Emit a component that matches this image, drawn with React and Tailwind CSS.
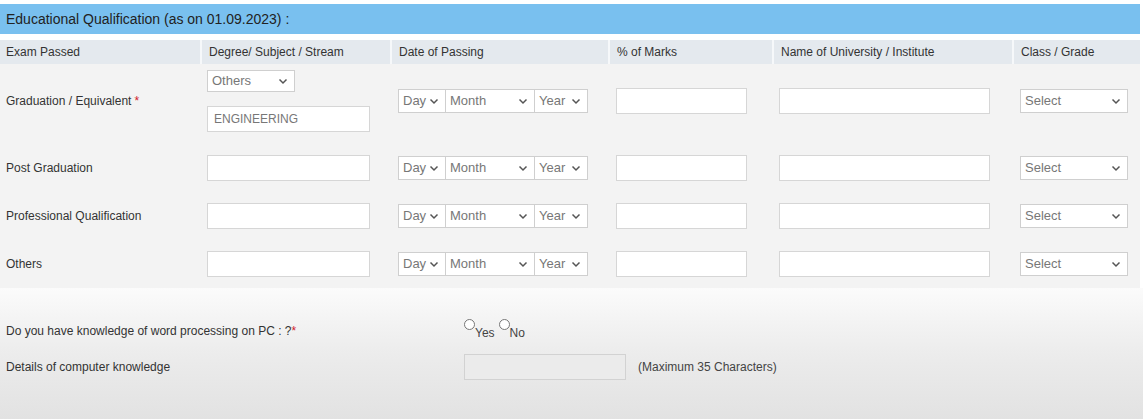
import React from "react";

const cols = "grid grid-cols-[200px_190px_218px_164px_240px_128px]";

function Chevron() {
  return (
    <svg width="10" height="7" viewBox="0 0 10 7" className="shrink-0">
      <polyline points="1.5,1.5 5,5 8.5,1.5" fill="none" stroke="#555" strokeWidth="1.5" />
    </svg>
  );
}

function FakeSelect({ label, className }) {
  return (
    <div
      className={`flex items-center justify-between bg-white border border-[#cfcfcf] pl-[4px] pr-[6px] text-[13px] text-[#777] ${className}`}
    >
      <span>{label}</span>
      <Chevron />
    </div>
  );
}

function Input({ className, children }) {
  return (
    <div className={`bg-white border border-[#d6d6d6] flex items-center pl-[6px] text-[12px] text-[#777] ${className}`}>
      {children}
    </div>
  );
}

function DateSelects() {
  return (
    <div className="flex">
      <FakeSelect label="Day" className="w-[48px] h-[24px]" />
      <FakeSelect label="Month" className="w-[90px] h-[24px] -ml-px" />
      <FakeSelect label="Year" className="w-[54px] h-[24px] -ml-px" />
    </div>
  );
}

function Row({ label, required, degree, height }) {
  return (
    <div className={`${cols} ${height} items-center`}>
      <div className="pl-[6px] text-[12px] text-[#333]">
        {label}
        {required && <span className="text-[#d0202a] ml-[3px]">*</span>}
      </div>
      <div className="pl-[7px]">{degree}</div>
      <div className="pl-[8px]"><DateSelects /></div>
      <div className="pl-[8px]"><Input className="w-[131px] h-[26px]" /></div>
      <div className="pl-[7px]"><Input className="w-[211px] h-[26px]" /></div>
      <div className="pl-[8px]"><FakeSelect label="Select" className="w-[108px] h-[24px]" /></div>
    </div>
  );
}

export default function App() {
  const headers = [
    "Exam Passed",
    "Degree/ Subject / Stream",
    "Date of Passing",
    "% of Marks",
    "Name of University / Institute",
    "Class / Grade",
  ];

  return (
    <div className="w-[1143px] h-[419px] bg-white font-['Liberation_Sans',Arial,sans-serif] overflow-hidden">
      <div className="w-[1140px] pt-[4px]">
        <div className="h-[30px] bg-[#79c0ef] flex items-center pl-[6px] text-[14px] text-[#222]">
          Educational Qualification (as on 01.09.2023) :
        </div>
        <div className="h-[6px] bg-white" />
        <div className={`${cols} h-[24px] bg-[#e4e9ee]`}>
          {headers.map((h, i) => (
            <div
              key={h}
              className={`flex items-center text-[12px] text-[#333] ${i === 0 ? "pl-[6px]" : "pl-[7px] border-l-2 border-[#f6f8fa]"}`}
            >
              {h}
            </div>
          ))}
        </div>
        <div className="bg-[#f3f3f3]">
          <Row
            label="Graduation / Equivalent"
            required
            height="h-[80px] pb-[6px]"
            degree={
              <div className="flex flex-col gap-[14px]">
                <FakeSelect label="Others" className="w-[88px] h-[22px]" />
                <Input className="w-[163px] h-[26px]">ENGINEERING</Input>
              </div>
            }
          />
          <Row label="Post Graduation" height="h-[48px]" degree={<Input className="w-[163px] h-[26px]" />} />
          <Row label="Professional Qualification" height="h-[48px]" degree={<Input className="w-[163px] h-[26px]" />} />
          <Row label="Others" height="h-[48px]" degree={<Input className="w-[163px] h-[26px]" />} />
        </div>
      </div>
      <div className="h-[131px] bg-gradient-to-b from-[#fbfbfb] via-[#ececec] to-[#e2e2e2] pt-[31px]">
        <div className="flex items-center h-[24px]">
          <div className="w-[464px] pl-[6px] text-[12px] text-[#333]">
            Do you have knowledge of word processing on PC : ?<span className="text-[#d0202a]">*</span>
          </div>
          <div className="flex items-start text-[12px] text-[#444]">
            <span className="w-[11px] h-[11px] rounded-full border border-[#777] bg-white mt-[-2px]" />
            <span className="mt-[3px]">Yes</span>
            <span className="w-[11px] h-[11px] rounded-full border border-[#777] bg-white mt-[-2px] ml-[4px]" />
            <span className="mt-[3px]">No</span>
          </div>
        </div>
        <div className="flex items-center h-[26px] mt-[11px]">
          <div className="w-[464px] pl-[6px] text-[12px] text-[#333]">Details of computer knowledge</div>
          <div className="w-[162px] h-[26px] bg-[#ebebeb] border border-[#d2d2d2]" />
          <div className="pl-[12px] text-[12px] text-[#444]">(Maximum 35 Characters)</div>
        </div>
      </div>
    </div>
  );
}
